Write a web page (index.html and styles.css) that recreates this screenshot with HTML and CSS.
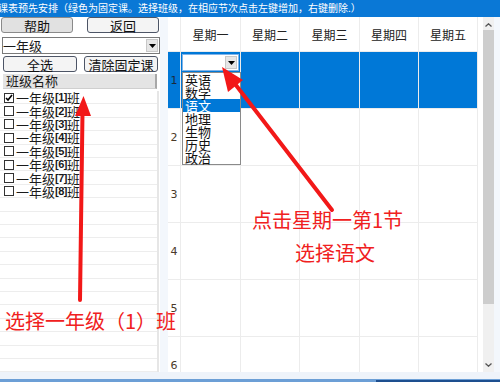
FILE: index.html
```html
<!DOCTYPE html>
<html lang="zh-CN">
<head>
    <meta charset="UTF-8">
    <meta name="viewport" content="width=device-width, initial-scale=1.0">
    <title>课表预先安排</title>
    <link rel="stylesheet" href="styles.css">
</head>
<body>
    <div class="titlebar">课表预先安排（绿色为固定课。选择班级，在相应节次点击左键增加，右键删除.）</div>

    <div class="main">
        <div class="side">
            <div class="btn-row">
                <button class="btn btn-pressed">帮助</button>
                <button class="btn">返回</button>
            </div>
            <div class="combo">
                <span class="combo-text">一年级</span>
                <span class="combo-btn"><svg width="7" height="4" viewBox="0 0 7 4"><path d="M0 0h7L3.5 4z" fill="#000"/></svg></span>
            </div>
            <div class="btn-row btn-row-second">
                <button class="btn btn-all">全选</button>
                <button class="btn btn-clear">清除固定课</button>
            </div>
            <div class="list-head">班级名称</div>
            <ul class="class-list">
                <li><span class="check checked"><svg width="8" height="8" viewBox="0 0 8 8"><path d="M1 4l2 2 4-5" fill="none" stroke="#000" stroke-width="1.6"/></svg></span>一年级<b>[1]</b>班</li>
                <li><span class="check"></span>一年级<b>[2]</b>班</li>
                <li><span class="check"></span>一年级<b>[3]</b>班</li>
                <li><span class="check"></span>一年级<b>[4]</b>班</li>
                <li><span class="check"></span>一年级<b>[5]</b>班</li>
                <li><span class="check"></span>一年级<b>[6]</b>班</li>
                <li><span class="check"></span>一年级<b>[7]</b>班</li>
                <li><span class="check"></span>一年级<b>[8]</b>班</li>
            </ul>
        </div>

        <div class="gutter"></div>

        <div class="table-wrap">
            <div class="timetable">
                <div class="cell head"></div>
                <div class="cell head">星期一</div>
                <div class="cell head">星期二</div>
                <div class="cell head">星期三</div>
                <div class="cell head">星期四</div>
                <div class="cell head">星期五</div>

                <div class="cell num selected">1</div>
                <div class="cell selected"></div>
                <div class="cell selected"></div>
                <div class="cell selected"></div>
                <div class="cell selected"></div>
                <div class="cell selected"></div>

                <div class="cell num">2</div>
                <div class="cell"></div><div class="cell"></div><div class="cell"></div><div class="cell"></div><div class="cell"></div>

                <div class="cell num">3</div>
                <div class="cell"></div><div class="cell"></div><div class="cell"></div><div class="cell"></div><div class="cell"></div>

                <div class="cell num">4</div>
                <div class="cell"></div><div class="cell"></div><div class="cell"></div><div class="cell"></div><div class="cell"></div>

                <div class="cell num">5</div>
                <div class="cell"></div><div class="cell"></div><div class="cell"></div><div class="cell"></div><div class="cell"></div>

                <div class="cell num">6</div>
                <div class="cell"></div><div class="cell"></div><div class="cell"></div><div class="cell"></div><div class="cell"></div>
            </div>

            <!-- cell editor opened on Monday, period 1 -->
            <div class="cell-combo">
                <span class="combo-btn"><svg width="7" height="4" viewBox="0 0 7 4"><path d="M0 0h7L3.5 4z" fill="#000"/></svg></span>
            </div>
            <ul class="subject-list">
                <li>英语</li>
                <li>数学</li>
                <li class="active">语文</li>
                <li>地理</li>
                <li>生物</li>
                <li>历史</li>
                <li>政治</li>
            </ul>
        </div>

        <div class="scrollbar">
            <span class="scroll-arrow"><svg width="7" height="4" viewBox="0 0 7 4"><path d="M0.5 3.5L3.5 0.8 6.5 3.5" fill="none" stroke="#555" stroke-width="1.3"/></svg></span>
            <span class="scroll-thumb"></span>
            <span class="scroll-arrow scroll-down"><svg width="7" height="4" viewBox="0 0 7 4"><path d="M0.5 0.5L3.5 3.2 6.5 0.5" fill="none" stroke="#555" stroke-width="1.3"/></svg></span>
        </div>
        <div class="edge"></div>
    </div>

    <div class="statusline"><span class="task"></span></div>

    <!-- red annotations -->
    <svg class="arrows" width="500" height="382" viewBox="0 0 500 382">
        <path d="M80 300L82.5 112" stroke="#f21818" stroke-width="4" stroke-linecap="round"/>
        <path d="M83.5 96L75 116L91 116z" fill="#f21818"/>
        <path d="M332 210L232 80" stroke="#f21818" stroke-width="4" stroke-linecap="round"/>
        <path d="M222 67L228 92L243 80z" fill="#f21818"/>
    </svg>
    <div class="note note-class">选择一年级（1）班</div>
    <div class="note note-cell">点击星期一第1节</div>
    <div class="note note-subject">选择语文</div>
</body>
</html>
```

FILE: styles.css
```css
* {
    margin: 0;
    padding: 0;
    box-sizing: border-box;
}

body {
    position: relative;
    width: 500px;
    height: 382px;
    overflow: hidden;
    background-color: #f3f7fc;
    font-family: "Noto Sans CJK SC", "DejaVu Sans", sans-serif;
    color: #1a1a1a;
}

.titlebar {
    height: 17px;
    line-height: 16px;
    background-color: #0a78d6;
    color: #fff;
    font-size: 10px;
    white-space: nowrap;
    overflow: hidden;
    margin-left: -2px;
}

.main {
    display: flex;
    height: 355px;
}

/* left panel */
.side {
    width: 160px;
    display: flex;
    flex-direction: column;
    background-color: #fff;
}

.btn-row {
    display: flex;
    justify-content: space-between;
    padding: 0 1px 0 1px;
}

.btn {
    width: 72px;
    height: 16px;
    border: 1px solid #4d5566;
    border-radius: 3px;
    background-color: #f4f4f4;
    font-family: inherit;
    font-size: 13px;
    line-height: 13px;
    color: #111;
}

.btn-pressed {
    background-color: #e1e1e1;
    border-color: #8a8a8a;
}

.btn-row-second {
    margin-top: 2px;
    padding: 0 2px 0 3px;
}

.btn-all {
    width: 74px;
}

.btn-clear {
    width: 74px;
}

.combo {
    display: flex;
    align-items: center;
    justify-content: space-between;
    margin: 4px 0 0 2px;
    height: 17px;
    border: 1px solid #7a7a7a;
    background-color: #fff;
    font-size: 13px;
    line-height: 15px;
}

.combo-text {
    margin-left: 0;
}

.combo-btn {
    display: flex;
    align-items: center;
    justify-content: center;
    width: 12px;
    height: 13px;
    margin-right: 1px;
    background-color: #e6e6e6;
    border: 1px solid #c8c8c8;
}

.list-head {
    margin: 2px 3px 0 3px;
    height: 15px;
    padding-left: 3px;
    background-color: #e4e4e4;
    border-right: 2px solid #a8a8a8;
    border-bottom: 1px solid #cfcfcf;
    font-size: 13px;
    line-height: 14px;
}

.class-list {
    flex: 1;
    list-style: none;
    margin: 2px 1px 0 0;
    padding-left: 4px;
    border-right: 2px solid #e6e6e6;
    background: repeating-linear-gradient(to bottom, #fff 0, #fff 12.4px, #ededed 12.4px, #ededed 13.4px);
}

.class-list li {
    display: flex;
    align-items: center;
    height: 13.4px;
    font-size: 13px;
    line-height: 13px;
    white-space: nowrap;
}

.class-list b {
    font-family: "Liberation Sans", sans-serif;
    font-size: 11px;
    font-weight: bold;
    letter-spacing: -0.5px;
}

.check {
    display: flex;
    align-items: center;
    justify-content: center;
    width: 10px;
    height: 10px;
    margin-right: 2px;
    border: 1px solid #333;
    background-color: #fff;
}

.gutter {
    width: 8px;
    background-color: #f3f7fc;
}

/* timetable */
.table-wrap {
    position: relative;
    width: 315px;
    overflow: hidden;
    background-color: #fff;
}

.timetable {
    display: grid;
    grid-template-columns: 12px 59px 58px 59px 58px 58px;
    grid-template-rows: 34px repeat(6, 56px);
    gap: 1px;
    width: 310px;
    background-color: #ececec;
    border-right: 1px solid #ececec;
}

.cell {
    background-color: #fff;
}

.head {
    display: flex;
    align-items: center;
    justify-content: center;
    font-size: 12px;
    color: #222;
}

.num {
    display: flex;
    align-items: center;
    justify-content: center;
    font-family: "DejaVu Sans", sans-serif;
    font-size: 11px;
    color: #4a3a2a;
}

.selected {
    background-color: #0078d7;
}

.num.selected {
    color: #1a2a3a;
}

.cell-combo {
    position: absolute;
    left: 14px;
    top: 37px;
    width: 57px;
    height: 17px;
    display: flex;
    justify-content: flex-end;
    align-items: center;
    background-color: #fff;
    border: 1px solid #7fb3e8;
}

.cell-combo .combo-btn {
    width: 12px;
    height: 13px;
    margin-right: 1px;
}

.subject-list {
    position: absolute;
    left: 14px;
    top: 55px;
    width: 59px;
    height: 93px;
    list-style: none;
    background-color: #fff;
    border: 1px solid #8a8a8a;
}

.subject-list li {
    height: 13px;
    padding-left: 2px;
    font-size: 13px;
    line-height: 13px;
    color: #111;
    white-space: nowrap;
}

.subject-list li.active {
    background-color: #0078d7;
    color: #fff;
}

/* scrollbar */
.scrollbar {
    width: 11px;
    display: flex;
    flex-direction: column;
    align-items: center;
    background-color: #f0f0f0;
}

.scroll-arrow {
    display: flex;
    align-items: center;
    justify-content: center;
    height: 13px;
    padding-top: 2px;
}

.scroll-thumb {
    width: 11px;
    height: 274px;
    background-color: #cdcdcd;
}

.scroll-down {
    margin-top: auto;
    margin-bottom: 2px;
}

.edge {
    flex: 1;
    background-color: #f3f7fc;
}

.statusline {
    position: relative;
    height: 10px;
    background-color: #eef3fa;
    border-bottom: 3px solid #6c9fd6;
}

.task {
    position: absolute;
    left: 376px;
    right: 0;
    bottom: -3px;
    height: 2px;
    background-color: #1d4f8f;
}

/* red annotations */
.arrows {
    position: absolute;
    left: 0;
    top: 0;
    pointer-events: none;
}

.note {
    position: absolute;
    color: #f02020;
    font-size: 20px;
    line-height: 22px;
    white-space: nowrap;
}

.note-class {
    left: 5px;
    top: 310px;
}

.note-cell {
    left: 252px;
    top: 209px;
}

.note-subject {
    left: 295px;
    top: 242px;
}
```
